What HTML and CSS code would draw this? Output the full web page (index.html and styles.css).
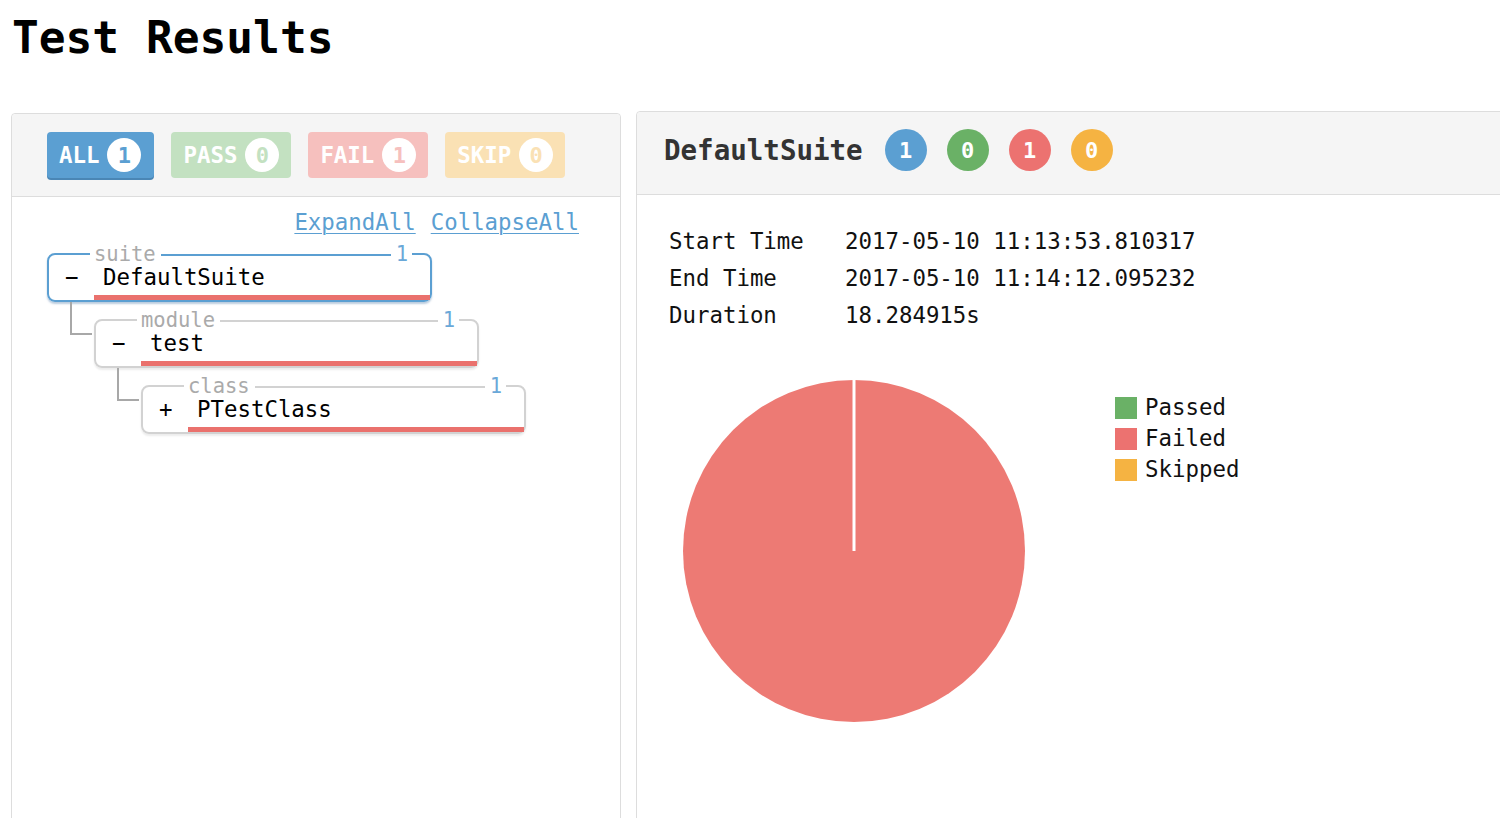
FILE: index.html
```html
<!DOCTYPE html>
<html>
<head>
<meta charset="utf-8">
<title>Test Results</title>
<link rel="stylesheet" href="styles.css">
</head>
<body>
<h1 class="title">Test Results</h1>
<div class="main">
  <div class="panel panel-left">
    <div class="panel-head filters">
      <div class="fbtn fbtn-all">ALL<span class="fbadge">1</span></div>
      <div class="fbtn fbtn-pass">PASS<span class="fbadge">0</span></div>
      <div class="fbtn fbtn-fail">FAIL<span class="fbadge">1</span></div>
      <div class="fbtn fbtn-skip">SKIP<span class="fbadge">0</span></div>
    </div>
    <div class="panel-body tree-body">
      <div class="links"><a href="#">ExpandAll</a><a href="#">CollapseAll</a></div>
      <div class="tree">
        <fieldset class="node node-suite">
          <legend class="node-legend"><span class="kind">suite</span><span class="rule"></span><span class="count">1</span></legend>
          <div class="node-row"><span class="toggle">−</span><span class="name">DefaultSuite</span></div>
        </fieldset>
        <div class="children">
          <div class="child">
            <fieldset class="node">
              <legend class="node-legend"><span class="kind">module</span><span class="rule"></span><span class="count">1</span></legend>
              <div class="node-row"><span class="toggle">−</span><span class="name">test</span></div>
            </fieldset>
            <div class="children">
              <div class="child">
                <fieldset class="node">
                  <legend class="node-legend"><span class="kind">class</span><span class="rule"></span><span class="count">1</span></legend>
                  <div class="node-row"><span class="toggle">+</span><span class="name">PTestClass</span></div>
                </fieldset>
              </div>
            </div>
          </div>
        </div>
      </div>
    </div>
  </div>
  <div class="panel panel-right">
    <div class="panel-head suite-head">
      <span class="suite-title">DefaultSuite</span>
      <span class="dot dot-all">1</span>
      <span class="dot dot-pass">0</span>
      <span class="dot dot-fail">1</span>
      <span class="dot dot-skip">0</span>
    </div>
    <div class="panel-body detail-body">
      <table class="times">
        <tr><td class="lbl">Start Time</td><td>2017-05-10 11:13:53.810317</td></tr>
        <tr><td class="lbl">End Time</td><td>2017-05-10 11:14:12.095232</td></tr>
        <tr><td class="lbl">Duration</td><td>18.284915s</td></tr>
      </table>
      <div class="chart">
        <svg class="pie" width="344" height="344" viewBox="0 0 344 344">
          <circle cx="172" cy="172" r="171" fill="#ed7a74"/>
          <line x1="172" y1="172" x2="172" y2="0" stroke="#ffffff" stroke-width="3"/>
        </svg>
        <ul class="legend">
          <li><span class="sw sw-pass"></span>Passed</li>
          <li><span class="sw sw-fail"></span>Failed</li>
          <li><span class="sw sw-skip"></span>Skipped</li>
        </ul>
      </div>
    </div>
  </div>
</div>
</body>
</html>
```
FILE: styles.css
```css
html, body {
  margin: 0;
  padding: 0;
  background: #ffffff;
  overflow: hidden;
}
body {
  font-family: "DejaVu Sans Mono", "Liberation Mono", monospace;
  color: #111;
}
.title {
  margin: 12px 0 0 12px;
  font-size: 44.5px;
  line-height: 52px;
  font-weight: bold;
  color: #000;
}
.main {
  display: flex;
  align-items: flex-start;
  gap: 15px;
  margin-top: 47px;
  padding-left: 11px;
}
.panel {
  border: 1px solid #dddddd;
  border-radius: 4px;
  background: #fff;
  min-height: 800px;
  flex: none;
}
.panel-left {
  width: 608px;
  margin-top: 2px;
}
.panel-right {
  width: 900px;
}
.panel-head {
  height: 83px;
  background: #f5f5f5;
  border-bottom: 1px solid #dddddd;
  border-radius: 4px 4px 0 0;
  box-sizing: border-box;
}
/* filter buttons */
.filters {
  display: flex;
  align-items: flex-start;
  gap: 17px;
  padding: 18px 0 0 35px;
}
.fbtn {
  display: flex;
  align-items: center;
  gap: 8px;
  height: 46px;
  padding: 0 12px 0 12px;
  border-radius: 4px;
  color: #fff;
  font-weight: bold;
  font-size: 22.4px;
  box-sizing: border-box;
}
.fbadge {
  display: inline-flex;
  align-items: center;
  justify-content: center;
  width: 34px;
  height: 34px;
  border-radius: 50%;
  background: #fff;
  font-size: 22px;
  font-weight: bold;
}
.fbtn-all {
  background: #5b9fd2;
  box-shadow: 0 2px 0 #4a86b5;
  padding-right: 13px;
}
.fbtn-all .fbadge { color: #5b9fd2; }
.fbtn-pass { background: #c3e1c1; }
.fbtn-pass .fbadge { color: #c3e1c1; }
.fbtn-fail { background: #f6c0be; }
.fbtn-fail .fbadge { color: #f6c0be; }
.fbtn-skip { background: #fae1b4; }
.fbtn-skip .fbadge { color: #fae1b4; }

/* tree */
.tree-body {
  padding: 12px 41px 0 35px;
}
.links {
  display: flex;
  justify-content: flex-end;
  gap: 15px;
  font-size: 22.4px;
  line-height: 26px;
}
.links a {
  color: #5b9fd2;
  text-decoration: underline;
  text-underline-offset: 3px;
  text-decoration-thickness: 1px;
}
.tree {
  margin-top: 9px;
}
.node {
  position: relative;
  width: 385px;
  box-sizing: border-box;
  margin: 0;
  padding: 0;
  border: 2px solid #d2d2d2;
  border-radius: 8px;
  box-shadow: 0 2px 2px rgba(0,0,0,0.08);
  background: #fff;
}
.node-suite {
  border-color: #5b9fd2;
  box-shadow: 0 2px 2px rgba(60,110,160,0.35);
}
.node-legend {
  display: flex;
  align-items: center;
  box-sizing: border-box;
  width: 322px;
  margin-left: 41px;
  padding: 0 4px;
  font-size: 20.5px;
  line-height: 20px;
}
.node-legend .kind {
  color: #aaaaaa;
}
.node-legend .rule {
  flex: 1;
  height: 0;
  border-top: 2px solid #d2d2d2;
  margin: 2px 5px 0 5px;
}
.node-suite .node-legend .rule {
  border-top-color: #5b9fd2;
}
.node-legend .count {
  color: #6aa8d8;
}
.node-row {
  display: flex;
  align-items: flex-start;
  padding-left: 16px;
  font-size: 22.4px;
  line-height: 26px;
  color: #000;
}
.toggle {
  width: 29px;
  flex: none;
}
.name {
  flex: 1;
  padding: 0 0 5px 9px;
  border-bottom: 5px solid #ea716d;
}
.children {
  padding-left: 47px;
}
.child {
  position: relative;
  margin-top: 8px;
}
.child::before {
  content: "";
  position: absolute;
  left: -24px;
  top: -8px;
  width: 22px;
  height: 33px;
  border-left: 2px solid #a8a8a8;
  border-bottom: 2px solid #a8a8a8;
  box-sizing: border-box;
}

/* right panel */
.suite-head {
  display: flex;
  align-items: center;
  gap: 20px;
  padding: 0 0 6px 27px;
}
.suite-title {
  font-size: 27.5px;
  font-weight: bold;
  color: #333;
  margin-right: 2px;
}
.dot {
  display: inline-flex;
  align-items: center;
  justify-content: center;
  width: 42px;
  height: 42px;
  border-radius: 50%;
  color: #fff;
  font-weight: bold;
  font-size: 22px;
}
.dot-all { background: #5b9fd2; }
.dot-pass { background: #6ab166; }
.dot-fail { background: #ec7270; }
.dot-skip { background: #f5b342; }

.detail-body {
  padding: 28px 0 0 32px;
}
.times {
  border-collapse: collapse;
  font-size: 22.4px;
  line-height: 37px;
  color: #111;
}
.times td {
  padding: 0;
}
.times .lbl {
  width: 176px;
}
.chart {
  display: flex;
  align-items: flex-start;
  margin-top: 45px;
  margin-left: 13px;
}
.pie {
  display: block;
  flex: none;
}
.legend {
  list-style: none;
  margin: 13px 0 0 89px;
  padding: 0;
  font-size: 22.4px;
  line-height: 31px;
}
.legend li {
  display: flex;
  align-items: center;
  gap: 8px;
}
.sw {
  width: 22px;
  height: 22px;
  display: inline-block;
}
.sw-pass { background: #6ab166; }
.sw-fail { background: #ec7270; }
.sw-skip { background: #f5b342; }
```
